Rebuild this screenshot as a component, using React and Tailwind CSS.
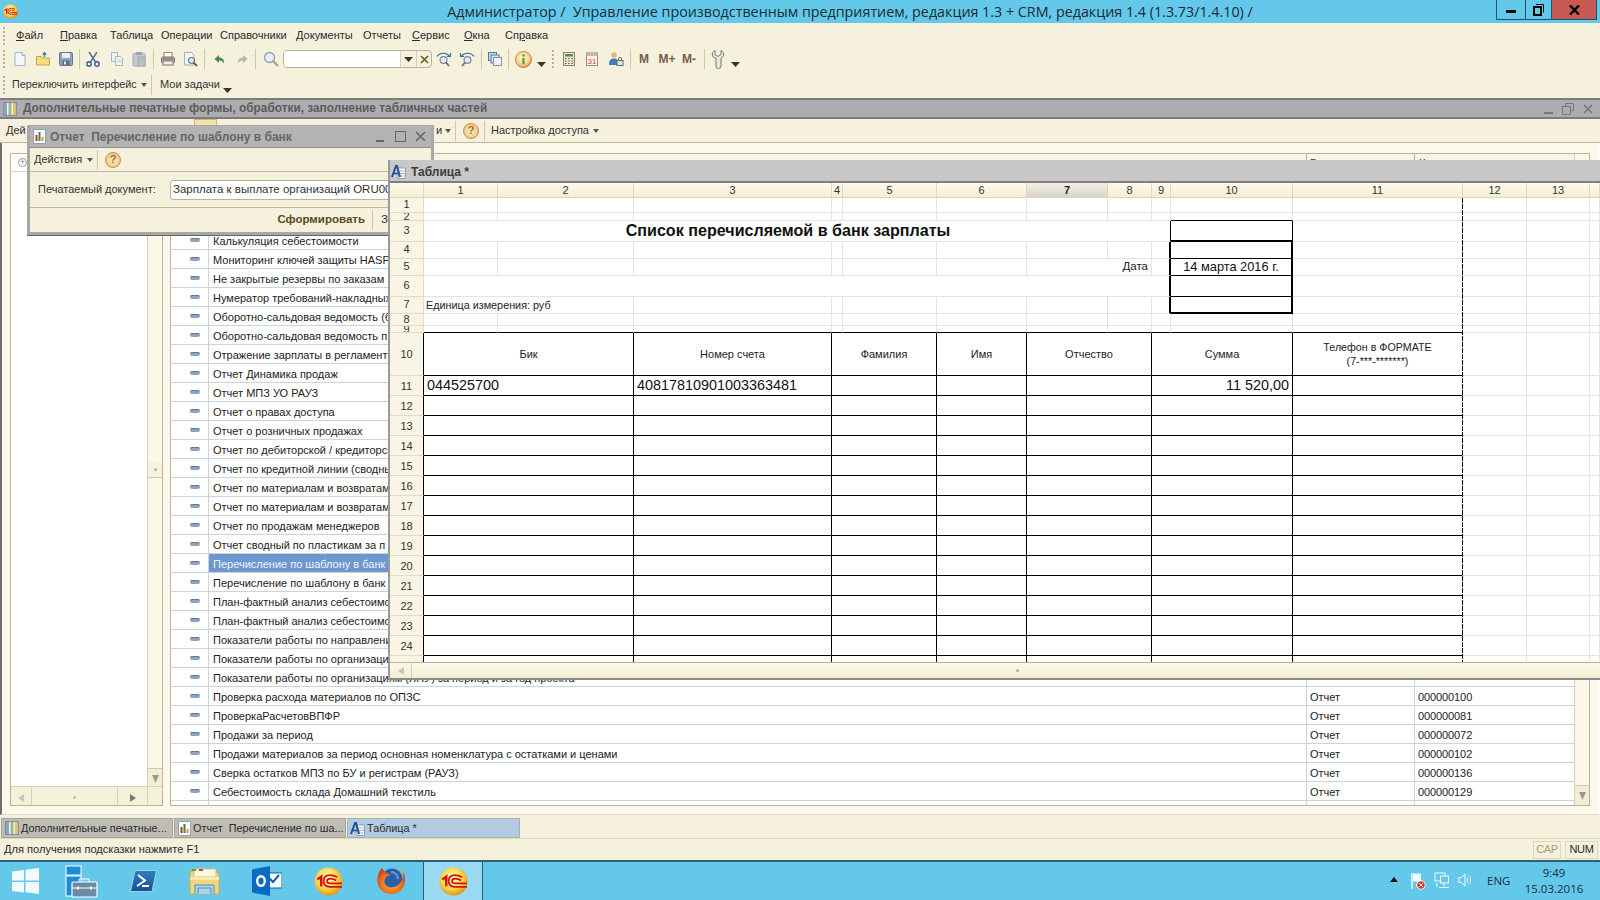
import React from "react";

const Logo1C = ({ size = 30, id = "g1c" }) => (
  <svg width={size} height={size} viewBox="0 0 30 30" className="flex-none">
    <defs>
      <radialGradient id={id} cx="45%" cy="40%" r="60%">
        <stop offset="0" stopColor="#fffbd0" />
        <stop offset="0.55" stopColor="#fbe05a" />
        <stop offset="1" stopColor="#e8960f" />
      </radialGradient>
    </defs>
    <circle cx="15" cy="15" r="14.5" fill={`url(#${id})`} />
    <path d="M3.5 13 L7.5 10 V20" fill="none" stroke="#d4140c" strokeWidth="2.6" />
    <path d="M24 10.5 Q20 8.5 16.5 8.5 Q10 8.5 10 14.5 Q10 20.5 16.5 20.5 H29" fill="none" stroke="#d4140c" strokeWidth="1.8" />
    <path d="M23 14 Q20 12 17 12 Q13.5 12 13.5 14.5 Q13.5 17 17 17 H29" fill="none" stroke="#d4140c" strokeWidth="1.8" />
  </svg>
);

const S = ({ children, w = 16, h = 16, vb = "0 0 16 16" }) => (
  <svg width={w} height={h} viewBox={vb} className="flex-none">{children}</svg>
);

const DocNew = () => (<S><path d="M3 1.5h7l3 3v10H3z" fill="#f4f8fc" stroke="#9db4cc" /><path d="M10 1.5v3h3" fill="#dce8f4" stroke="#9db4cc" /></S>);
const Folder = () => (<S><path d="M1.5 5.5h5l1 1.5h7v7h-13z" fill="#f7dc7c" stroke="#c9a446" /><path d="M9.5 6V2M7.8 3.6 9.5 1.6l1.8 2" stroke="#3c7fb0" strokeWidth="1.4" fill="none" /></S>);
const Save = () => (<S><rect x="1.5" y="1.5" width="13" height="13" rx="1" fill="#8ea3b8" stroke="#66798c" /><rect x="4" y="2" width="8" height="5" fill="#e8eef4" /><rect x="4.5" y="9.5" width="7" height="5" fill="#5c6f82" /><rect x="6" y="10.5" width="2" height="3" fill="#e0e6ec" /></S>);
const Cut = () => (<S><path d="M4 1 10.5 11M12 1 5.5 11" stroke="#5b6f85" strokeWidth="1.4" fill="none" /><circle cx="4" cy="13" r="2.2" fill="none" stroke="#2f5f9e" strokeWidth="1.4" /><circle cx="12" cy="13" r="2.2" fill="none" stroke="#2f5f9e" strokeWidth="1.4" /></S>);
const Copy = () => (<S><path d="M2.5 1.5h6v9h-6z" fill="#eef1f5" stroke="#aab4bf" /><path d="M6.5 5.5h5l2 2v7h-7z" fill="#f4f6f8" stroke="#aab4bf" /><path d="M8 9h4M8 11h4" stroke="#c0c8d0" /></S>);
const Paste = () => (<S><rect x="2" y="2.5" width="12" height="12.5" rx="1" fill="#c3cad0" stroke="#a4acb4" /><rect x="5" y="1" width="6" height="3" fill="#9aa4ac" /><rect x="7" y="6" width="7" height="9" fill="#b8c0c6" stroke="#a0a8b0" /></S>);
const Printer = () => (<S><rect x="4" y="1.5" width="8" height="5" fill="#fff" stroke="#8d8d8d" /><rect x="1.5" y="6" width="13" height="6" rx="1.5" fill="#b9b6b0" stroke="#6e6a66" /><rect x="3" y="10" width="10" height="4" fill="#eee" stroke="#86786a" /><path d="M2.5 8h11" stroke="#8a4b3a" /></S>);
const Preview = () => (<S><path d="M2.5 1.5h7l2.5 2.5v10h-9.5z" fill="#f4f7fa" stroke="#a3afbc" /><circle cx="9.5" cy="9.5" r="3" fill="#dbe9f5" stroke="#5d7893" strokeWidth="1.2" /><path d="M11.5 11.5 15 15" stroke="#8a5a34" strokeWidth="1.8" /></S>);
const Back = () => (<S><path d="M7 4 2.5 8 7 12V9.5c2.5 0 4 1 5 3 .6-3.5-1.6-6-5-6z" fill="#3f8f4a" /></S>);
const Fwd = () => (<S><path d="M9 4 13.5 8 9 12V9.5c-2.5 0-4 1-5 3-.6-3.5 1.6-6 5-6z" fill="#a9bdb0" /></S>);
const Search = () => (<S><circle cx="6.5" cy="6.5" r="5" fill="#e6eef6" stroke="#8ea0b0" strokeWidth="1.3" /><path d="M10.2 10.2 15 15" stroke="#b89968" strokeWidth="2.2" /></S>);
const FindNext = ({ flip }) => (
  <S>
    <g transform={flip ? "matrix(-1 0 0 1 16 0)" : undefined}>
      <circle cx="7.5" cy="9" r="3.4" fill="#e4edf5" stroke="#77889a" strokeWidth="1.2" />
      <path d="M10 11.5 13 15" stroke="#7a6a58" strokeWidth="1.8" />
      <path d="M1 5.5C4 1.5 10 1 13.5 5M14.5 2v3.5H11" stroke="#2f6fa0" strokeWidth="1.2" fill="none" />
    </g>
  </S>
);
const Windows = () => (<S><rect x="1.5" y="1.5" width="8" height="8" fill="#c9d8ea" stroke="#4f7aa6" /><rect x="4" y="4" width="8" height="8" fill="#dce6f0" stroke="#4f7aa6" /><rect x="6.5" y="6.5" width="8" height="8" fill="#eef2f6" stroke="#7f95ab" /></S>);
const Info = () => (
  <svg width="17" height="17" viewBox="0 0 17 17" className="flex-none">
    <defs><radialGradient id="gi" cx="45%" cy="40%" r="60%"><stop offset="0" stopColor="#fff6da" /><stop offset="0.7" stopColor="#f6d48a" /><stop offset="1" stopColor="#d9963c" /></radialGradient></defs>
    <circle cx="8.5" cy="8.5" r="8" fill="url(#gi)" stroke="#c08a40" />
    <circle cx="8.5" cy="4.5" r="1.2" fill="#5f9a3c" />
    <rect x="7.4" y="6.8" width="2.2" height="6.4" fill="#5f9a3c" />
  </svg>
);
const Help = () => (
  <div className="w-[16px] h-[16px] rounded-full bg-radial from-[#fff2cf] to-[#e9b566] border border-[#c88f3e] flex items-center justify-center text-[11px] font-bold leading-none text-[#a9702a] flex-none">?</div>
);
const Calc = () => (<S><rect x="2.5" y="1.5" width="11" height="13" fill="#efe9cf" stroke="#8a8468" /><rect x="4" y="3" width="8" height="2.5" fill="#5f8a5f" /><path d="M4 7.5h1.5M7.2 7.5h1.5M10.4 7.5H12M4 10h1.5M7.2 10h1.5M10.4 10H12M4 12.5h1.5M7.2 12.5h1.5M10.4 12.5H12" stroke="#555" strokeWidth="1.2" /></S>);
const Calendar = () => (
  <S><rect x="2.5" y="2" width="11" height="12.5" fill="#fbf8ee" stroke="#a08a70" /><rect x="2.5" y="2" width="11" height="3" fill="#cbb8a0" /><text x="8" y="13" textAnchor="middle" fontSize="8" fill="#d0402a" fontFamily="Liberation Sans">31</text></S>
);
const UserLock = () => (<S><circle cx="6" cy="4" r="2.8" fill="#e6b678" /><path d="M1 13c0-4 2-5.5 5-5.5 1.5 0 2.5.4 3 1V14H1z" fill="#3d7cc0" /><rect x="9" y="9.5" width="6" height="5" fill="#e6e6e6" stroke="#666" /><path d="M10.5 9.5V8a1.6 1.6 0 0 1 3.2 0v1.5" fill="none" stroke="#666" /></S>);
const Wrench = () => (<S w={16} h={20} vb="0 0 16 20"><path d="M5 1.5v4l3 2 3-2v-4c2 1 3 2.5 2.6 4.6-.3 1.6-1.4 2.6-2.6 3V17a2.5 2.5 0 0 1-5 0V9.1C3.8 8.7 2.7 7.7 2.4 6.1 2 4 3 2.5 5 1.5z" fill="#e8e8e4" stroke="#77776f" /></S>);
const Tri = () => (<svg width="9" height="5" viewBox="0 0 9 5" className="flex-none"><path d="M0 0h9L4.5 5z" fill="#3a3524" /></svg>);
const Caret = () => (<svg width="6" height="4" viewBox="0 0 6 4" className="flex-none"><path d="M0 0h6L3 4z" fill="#555" /></svg>);

const TableIcon = () => (<S w={14} h={16} vb="0 0 14 16"><rect x="0.5" y="1.5" width="13" height="13" fill="#f5f1dc" stroke="#88a" /><rect x="1" y="2" width="3" height="12" fill="#7fa9c9" /><rect x="5.5" y="2" width="3" height="12" fill="#9fb98a" /><rect x="10" y="2" width="3" height="12" fill="#d8c470" /></S>);
const ReportIcon = () => (<S w={13} h={15} vb="0 0 13 15"><path d="M.5.5h12v14H.5z" fill="#fff" stroke="#8fa0b4" /><rect x="2.5" y="6" width="2" height="6" fill="#c03020" /><rect x="5.5" y="3" width="2" height="9" fill="#3a8a3a" /><rect x="8.5" y="8" width="2" height="4" fill="#d8a020" /></S>);
const SheetIcon = () => (
  <svg width="15" height="15" viewBox="0 0 15 15" className="flex-none">
    <path d="M7 4h7.5v10.5H7z" fill="#fff" stroke="#8fa0b4" />
    <path d="M8 7h6M8 9.5h6M8 12h6" stroke="#9db4cc" />
    <path d="M1 13 5 2h1l3 11" fill="none" stroke="#1f4f96" strokeWidth="2" />
    <path d="M3 9.5h4.5" stroke="#1f4f96" strokeWidth="1.5" />
  </svg>
);

const Sep = ({ c = "ml-[2px]" }) => <div className={`${c} w-px h-[20px] bg-[#cdc8aa] flex-none`} />;
const Grip = ({ c }) => <div className={`${c} w-[3px] h-[18px] flex-none border-l-2 border-dotted border-[#b9b594]`} />;
const Slot = ({ c = "", children }) => <div className={`${c} w-[22px] flex-none flex items-center justify-center`}>{children}</div>;

const names = [
  "", "", "",
  "Калькуляция себестоимости",
  "Мониторинг ключей защиты HASP",
  "Не закрытые резервы по заказам",
  "Нумератор требований-накладных",
  "Оборотно-сальдовая ведомость (б",
  "Оборотно-сальдовая ведомость п",
  "Отражение зарплаты в регламент",
  "Отчет Динамика продаж",
  "Отчет МПЗ УО РАУЗ",
  "Отчет о правах доступа",
  "Отчет о розничных продажах",
  "Отчет по дебиторской / кредиторской",
  "Отчет по кредитной линии (сводный",
  "Отчет по материалам и возвратам",
  "Отчет по материалам и возвратам",
  "Отчет по продажам менеджеров",
  "Отчет сводный по пластикам за п",
  "Перечисление по шаблону в банк",
  "Перечисление по шаблону в банк",
  "План-фактный анализ себестоимости",
  "План-фактный анализ себестоимости",
  "Показатели работы по направлениям",
  "Показатели работы по организациям",
  "Показатели работы по организациям (ЛНУ) за период и за год проекта",
  "Проверка расхода материалов по ОПЗС",
  "ПроверкаРасчетовВПФР",
  "Продажи за период",
  "Продажи материалов за период основная номенклатура с остатками и ценами",
  "Сверка остатков МПЗ по БУ и регистрам (РАУЗ)",
  "Себестоимость склада Домашний текстиль",
];
const codes = { 27: "000000100", 28: "000000081", 29: "000000072", 30: "000000102", 31: "000000136", 32: "000000129" };

const ListRow = ({ i, name }) => {
  const sel = i === 20;
  return (
    <div className="flex h-[19px] flex-none border-b border-[#c9d5dc] text-[11px] leading-[20px] text-[#222]">
      <div className="w-[38px] flex-none flex items-center justify-center border-r border-[#c9d5dc] pl-[10px]">
        {name && <div className="w-[10px] h-[4px] rounded-full bg-[#8fa4ba] border-t border-[#5f7790]" />}
      </div>
      <div className={`w-[1098px] flex-none pl-[4px] whitespace-nowrap overflow-hidden border-r border-[#c9d5dc] ${sel ? "bg-[#6e97cf] text-[#eef4fb]" : ""}`}>{name}</div>
      <div className="w-[108px] flex-none pl-[3px] border-r border-[#c9d5dc]">{codes[i] ? "Отчет" : ""}</div>
      <div className="w-[159px] flex-none pl-[3px] tracking-[-0.1px]">{codes[i] || ""}</div>
    </div>
  );
};

const L = "border-r border-b border-[#e3e3e3]";
const K = "border-r border-b border-black";
const ThickR = "border-r-2 border-r-black border-b border-b-[#e3e3e3]";
const span = { 1: "col-span-1", 2: "col-span-2", 8: "col-span-8", 9: "col-span-9" };

const colHeads = ["1","2","3","4","5","6","7","8","9","10","11","12","13",""];

const RowHead = ({ n, black, low, high }) => (
  <div className={`flex items-center justify-center overflow-hidden bg-[#f9f5e4] border-b border-b-[#e2ddc2] border-r ${black ? "border-r-black" : "border-r-[#e2ddc2]"} ${low ? "pt-[1px]" : ""} ${high ? "pb-[2px]" : ""} text-[11px] leading-none text-[#333]`}>{n}</div>
);
const C = ({ s = 1, c = L, children }) => <div className={`${span[s]} ${c} overflow-hidden min-w-0`}>{children}</div>;
const lights = (n) => Array.from({ length: n }, (_, i) => <C key={`l${i}`} />);

const headCell = `${K} flex items-center justify-center text-[11px] text-[#222]`;
const TableRow = ({ n, vals = {}, low }) => (
  <>
    <RowHead n={n} black low={low} />
    <C s={2} c={headCell}>{vals.a}</C>
    <C c={headCell}>{vals.b}</C>
    <C s={2} c={headCell}>{vals.c}</C>
    <C c={headCell}>{vals.d}</C>
    <C s={2} c={headCell}>{vals.e}</C>
    <C s={2} c={headCell}>{vals.f}</C>
    <C c="border-r border-r-white border-b border-b-black flex flex-col items-center justify-center text-[10.7px] text-[#222] leading-[14px]">{vals.g}</C>
    {lights(3)}
  </>
);

const Sheet = () => (
  <div className="relative h-[479px] overflow-hidden bg-white flex-none">
    <div className="grid grid-cols-[34px_74px_136px_198px_11px_94px_90px_81px_44px_19px_122px_170px_64px_63px_10px] grid-rows-[15px_15px_8px_21px_17px_17px_21px_17px_12px_7px_43px_repeat(14,20px)_7px]">
      <div className="bg-linear-to-b from-[#fdfaec] to-[#f3eed4] border-r border-b border-[#ddd8bc]" />
      {colHeads.map((h, i) => (
        <div key={i} className={`flex items-center justify-center text-[11px] leading-none border-r border-b border-[#ddd8bc] ${h === "7" ? "bg-linear-to-b from-[#f4f1e4] to-[#d9d5c6] font-bold text-[#222]" : "bg-linear-to-b from-[#fdfaec] to-[#f3eed4] text-[#333]"}`}>{h}</div>
      ))}
      <RowHead n="1" high />{lights(14)}
      <RowHead n="2" />{lights(9)}<C c="border-r border-r-[#e3e3e3] border-b border-b-black" />{lights(4)}
      <RowHead n="3" high />
      <C s={8} c="border-b border-[#e3e3e3] flex items-center justify-center pb-[2px] text-[16.1px] font-bold text-[#111] whitespace-nowrap">Список перечисляемой в банк зарплаты</C>
      <C c="border-r border-r-black border-b border-b-[#e3e3e3]" />
      <C c="border-r border-r-black border-b-2 border-b-black" />
      {lights(4)}
      <RowHead n="4" high />{lights(8)}<C c={ThickR} /><C c="border-r-2 border-r-black border-b border-b-black" />{lights(4)}
      <RowHead n="5" high />{lights(6)}
      <C s={2} c={`${L} flex items-center justify-end pr-[3px] text-[11.5px] text-[#222]`}>Дата</C>
      <C c={ThickR} />
      <C c="border-r-2 border-r-black border-b border-b-black flex items-center justify-center text-[12.8px] text-[#111] whitespace-nowrap">14 марта 2016 г.</C>
      {lights(4)}
      <RowHead n="6" high />
      <C s={9} c={ThickR} />
      <C c="border-r-2 border-r-black border-b border-b-black" />
      {lights(4)}
      <RowHead n="7" high />
      <C s={2} c={`${L} flex items-center pl-[2px] text-[10.8px] text-[#222] whitespace-nowrap`}>Единица измерения: руб</C>
      {lights(6)}
      <C c={ThickR} />
      <C c="border-r-2 border-r-black border-b-2 border-b-black" />
      {lights(4)}
      <RowHead n="8" />{lights(14)}
      <RowHead n="9" />
      {Array.from({ length: 11 }, (_, i) => <C key={i} c="border-r border-r-[#e3e3e3] border-b border-b-black" />)}
      {lights(3)}
      <TableRow n="10" vals={{ a: "Бик", b: "Номер счета", c: "Фамилия", d: "Имя", e: "Отчество", f: "Сумма", g: (<><span>Телефон в ФОРМАТЕ</span><span>(7-***-*******)</span></>) }} />
      <RowHead n="11" black low />
      <C s={2} c={`${K} flex items-center pl-[3px] pt-[1px] text-[14.4px] text-[#111]`}>044525700</C>
      <C c={`${K} flex items-center pl-[3px] pt-[1px] text-[14.4px] text-[#111]`}>40817810901003363481</C>
      <C s={2} c={K} />
      <C c={K} />
      <C s={2} c={K} />
      <C s={2} c={`${K} flex items-center justify-end pr-[3px] pt-[1px] text-[14.4px] text-[#111] whitespace-nowrap`}>11 520,00</C>
      <C c="border-r border-r-white border-b border-b-black" />
      {lights(3)}
      {Array.from({ length: 13 }, (_, i) => <TableRow key={i} n={String(12 + i)} low />)}
      <TableRow n="" />
    </div>
    <div className="absolute left-[1072px] top-[15px] bottom-0 w-px bg-[repeating-linear-gradient(to_bottom,#000_0,#000_5px,transparent_5px,transparent_6px)]" />
  </div>
);

const Btn = ({ children, c = "" }) => <div className={`flex-none flex items-center justify-center ${c}`}>{children}</div>;

const TaskIcon = ({ c, children }) => <div className={`absolute top-0 bottom-0 flex items-center ${c}`}>{children}</div>;

export default function App() {
  return (
    <div className="relative w-[1600px] h-[900px] overflow-hidden bg-[#f5f1dc] font-['Liberation_Sans',Arial,sans-serif] text-[11px] text-[#333]">
      {/* Title bar */}
      <div className="relative h-[23px] bg-[#63c8ea] flex items-center justify-center">
        <div className="absolute left-[3px] top-[4px]"><Logo1C size={15} id="g1ct" /></div>
        <div className="pl-[100px] font-['Open_Sans',sans-serif] text-[14.3px] text-[#1b2a33] whitespace-pre">Администратор /  Управление производственным предприятием, редакция 1.3 + CRM, редакция 1.4 (1.3.73/1.4.10) /</div>
        <div className="absolute right-[3px] top-0 h-[20px] flex border-b border-l border-r border-[#1f5468]">
          <div className="w-[29px] flex items-center justify-center border-r border-[#1f5468]"><div className="w-[10px] h-[3px] bg-black mt-[3px]" /></div>
          <div className="w-[26px] flex items-center justify-center border-r border-[#1f5468]">
            <svg width="11" height="12" viewBox="0 0 11 12"><path d="M3 0.5h7.5v8" fill="none" stroke="#000" /><rect x="1" y="3" width="7" height="8" fill="none" stroke="#000" strokeWidth="2" /></svg>
          </div>
          <div className="w-[44px] bg-[#c75a52] flex items-center justify-center">
            <svg width="11" height="10" viewBox="0 0 11 10"><path d="M1 0.5 10 9.5M10 0.5 1 9.5" stroke="#000" strokeWidth="2.4" /></svg>
          </div>
        </div>
      </div>

      {/* Menu */}
      <div className="h-[25px] flex items-center relative text-[11px] text-[#2b2b2b] whitespace-nowrap">
        <Grip c="ml-[3px]" />
        <span className="ml-[10px] w-[44px] flex-none"><u>Ф</u>айл</span>
        <span className="w-[50px] flex-none"><u>П</u>равка</span>
        <span className="w-[51px] flex-none">Таблица</span>
        <span className="w-[59px] flex-none">Операции</span>
        <span className="w-[76px] flex-none">Справочники</span>
        <span className="w-[67px] flex-none">Документы</span>
        <span className="w-[49px] flex-none">Отчеты</span>
        <span className="w-[52px] flex-none"><u>С</u>ервис</span>
        <span className="w-[41px] flex-none"><u>О</u>кна</span>
        <span>Сп<u>р</u>авка</span>
      </div>

      {/* Toolbar 1 */}
      <div className="h-[22px] flex items-center">
        <Grip c="ml-[3px]" />
        <Slot c="ml-[3px]"><DocNew /></Slot>
        <Slot c="ml-px"><Folder /></Slot>
        <Slot c="ml-px"><Save /></Slot>
        <Sep c="ml-[2px]" />
        <Slot c="ml-[2px]"><Cut /></Slot>
        <Slot c="ml-[2px]"><Copy /></Slot>
        <Slot><Paste /></Slot>
        <Sep c="ml-[3px]" />
        <Slot c="ml-[3px]"><Printer /></Slot>
        <Slot><Preview /></Slot>
        <Sep c="ml-[3px]" />
        <Slot c="ml-[4px]"><Back /></Slot>
        <Slot><Fwd /></Slot>
        <Sep c="ml-[2px]" />
        <Slot c="ml-[4px]"><Search /></Slot>
        <div className="ml-px w-[149px] h-[18px] flex-none flex rounded-[4px] border border-[#b8b49a] overflow-hidden">
          <div className="flex-1 bg-white" />
          <div className="w-[16px] flex items-center justify-center border-l border-[#d6d2b8]"><Tri /></div>
          <div className="w-[15px] flex items-center justify-center border-l border-[#d6d2b8]">
            <svg width="9" height="9" viewBox="0 0 9 9"><path d="M1 1l7 7M8 1 1 8" stroke="#6a5a20" strokeWidth="1.6" /></svg>
          </div>
        </div>
        <Slot c="ml-px"><FindNext /></Slot>
        <Slot c="ml-px"><FindNext flip /></Slot>
        <Sep c="ml-[3px]" />
        <Slot c="ml-[2px]"><Windows /></Slot>
        <Sep c="ml-[2px]" />
        <Slot c="ml-[3px]"><Info /></Slot>
        <Btn c="ml-[2px] w-[10px] pt-[11px]"><Tri /></Btn>
        <Grip c="ml-[6px]" />
        <Slot c="ml-[3px]"><Calc /></Slot>
        <Slot c="ml-px"><Calendar /></Slot>
        <Slot c="ml-[2px]"><UserLock /></Slot>
        <Sep c="ml-[3px]" />
        <Slot c="ml-[2px]"><span className="text-[12px] font-bold text-[#7a5a48]">M</span></Slot>
        <Slot c="ml-px"><span className="text-[12px] font-bold text-[#7a5a48]">M+</span></Slot>
        <Slot><span className="text-[12px] font-bold text-[#7a5a48]">M-</span></Slot>
        <Sep c="ml-[4px]" />
        <Slot c="ml-[2px]"><Wrench /></Slot>
        <Btn c="ml-px w-[10px] pt-[11px]"><Tri /></Btn>
      </div>

      {/* Toolbar 2 */}
      <div className="h-[28px] flex items-center pt-[1px] text-[10.75px]">
        <Grip c="ml-[3px]" />
        <span className="ml-[6px] w-[125px] flex-none whitespace-nowrap">Переключить интерфейс</span>
        <span className="ml-[4px]"><Caret /></span>
        <Sep c="ml-[4px]" />
        <span className="ml-[8px] w-[58px] flex-none whitespace-nowrap text-[11px]">Мои задачи</span>
        <Btn c="ml-[5px] w-[9px] pt-[12px]"><Tri /></Btn>
      </div>

      {/* Window 1 title */}
      <div className="h-[21px] bg-[#adadad] border-t-2 border-b-2 border-[#7c7c7c] flex items-center pl-[3px] pr-[7px] relative">
        <TableIcon />
        <span className="ml-[6px] text-[11.85px] font-bold text-[#5b5b5b] whitespace-nowrap">Дополнительные печатные формы, обработки, заполнение табличных частей</span>
        <div className="ml-auto flex items-center gap-[9px] text-[#6a6a6a]">
          <div className="w-[9px] h-[2px] bg-[#777] mt-[8px]" />
          <svg width="12" height="12" viewBox="0 0 12 12"><path d="M3.5 3V.5h8v7H9" fill="none" stroke="#777" /><rect x=".5" y="3.5" width="8" height="8" fill="none" stroke="#777" /></svg>
          <svg width="10" height="10" viewBox="0 0 10 10"><path d="M1 1l8 8M9 1 1 9" stroke="#777" strokeWidth="1.6" /></svg>
        </div>
      </div>

      {/* Window 1 toolbar */}
      <div className="h-[24px] flex items-center border-b border-[#bdb99c] relative pl-[6px] text-[11px]">
        <span className="w-[430px] flex-none">Дей</span>
        <span className="w-[6px] flex-none">и</span>
        <span className="ml-[3px]"><Caret /></span>
        <Sep c="ml-[4px]" />
        <span className="ml-[7px]"><Help /></span>
        <Sep c="ml-[5px]" />
        <span className="ml-[6px] whitespace-nowrap">Настройка доступа</span>
        <span className="ml-[4px]"><Caret /></span>
        <div className="absolute left-[194px] top-0 w-[23px] h-[8px] bg-[#f3e3a8] border border-[#c8b87a]" />
      </div>

      {/* Window 1 body */}
      <div className="h-[672px] flex items-start gap-[7px] bg-[#fcf9ec] pt-[10px] pl-[8px] border-l-2 border-l-[#6f6f6f] border-r-2 border-r-white border-b border-b-[#dfdcc8]">
        {/* tree */}
        <div className="w-[153px] h-[653px] flex-none flex flex-col border border-[#b9b594] bg-white">
          <div className="flex-1 flex min-h-0">
            <div className="w-[136px] flex-none">
              <div className="h-[18px] border-b border-[#d6d6d6] flex items-center pl-[7px]">
                <div className="w-[9px] h-[9px] rounded-full border border-[#9a9a9a] flex items-center justify-center text-[9px] leading-none text-[#777]">+</div>
              </div>
            </div>
            <div className="w-[15px] flex-none flex flex-col border-l border-[#d6d2b8] bg-[#fbf8ea]">
              <div className="h-[308px] flex-none" />
              <div className="h-[16px] flex-none border-b border-[#cfcbb0] bg-[#f6f2df] flex items-center justify-center"><div className="w-[3px] h-[3px] rounded-full bg-[#b7b39c]" /></div>
              <div className="flex-1" />
              <div className="h-[18px] flex-none bg-[#f1edd6] border-t border-[#cfcbb0] flex items-center justify-center pt-[3px]">
                <svg width="7" height="8" viewBox="0 0 7 8"><path d="M0 0h7L3.5 8z" fill="#9a9a90" /></svg>
              </div>
            </div>
          </div>
          <div className="h-[19px] flex-none flex border-t border-[#d6d2b8] bg-[#f4f0da]">
            <div className="w-[21px] flex items-center justify-center border-r border-[#d6d2b8] pt-[3px]">
              <svg width="6" height="8" viewBox="0 0 6 8"><path d="M6 0v8L0 4z" fill="#c8c6b8" /></svg>
            </div>
            <div className="w-[86px] flex items-center justify-center border-r border-[#d6d2b8] pt-[3px]"><div className="w-[3px] h-[3px] rounded-full bg-[#c4c0a8]" /></div>
            <div className="w-[30px] flex items-center justify-center border-r border-[#d6d2b8] pt-[3px]">
              <svg width="6" height="8" viewBox="0 0 6 8"><path d="M0 0v8l6-4z" fill="#77776f" /></svg>
            </div>
          </div>
        </div>

        {/* list table */}
        <div className="w-[1420px] h-[653px] flex-none flex border border-[#b9b594] bg-white">
          <div className="w-[1403px] flex-none flex flex-col">
            <div className="h-[20px] flex-none flex border-b border-[#c9d5dc] bg-[#f8f5e6] text-[11px] leading-[18px]">
              <div className="w-[1135px] flex-none border-r border-[#b9b594] ml-[1px]" />
              <div className="w-[108px] flex-none pl-[3px] border-r border-[#b9b594]">Вид</div>
              <div className="w-[159px] flex-none pl-[4px]">Код</div>
            </div>
            {names.map((n, i) => <ListRow key={i} i={i} name={n} />)}
            <div className="flex-1 flex">
              <div className="w-[38px] border-r border-[#c9d5dc]" />
              <div className="w-[1098px] border-r border-[#c9d5dc]" />
              <div className="w-[108px] border-r border-[#c9d5dc]" />
            </div>
          </div>
          <div className="w-[15px] flex-none flex flex-col justify-end border-l border-[#d6d2b8] bg-[#fbf8ea]">
            <div className="h-[20px] bg-[#f1edd6] border-t border-[#cfcbb0] flex items-center justify-center">
              <svg width="7" height="8" viewBox="0 0 7 8"><path d="M0 0h7L3.5 8z" fill="#9a9a90" /></svg>
            </div>
          </div>
        </div>
      </div>

      {/* Window tabs */}
      <div className="h-[24px] flex items-start pt-[3px] pl-px gap-px text-[10.85px] text-[#2b2b2b] border-b border-[#dcd8c0]">
        <div className="w-[172px] h-[20px] flex items-center gap-[2px] pl-[3px] bg-[#bdbdb4] border border-[#a5a49a] whitespace-pre overflow-hidden"><TableIcon /><span>Дополнительные печатные...</span></div>
        <div className="w-[172px] h-[20px] flex items-center gap-[2px] pl-[3px] bg-[#bdbdb4] border border-[#a5a49a] whitespace-pre overflow-hidden"><ReportIcon /><span>Отчет  Перечисление по ша...</span></div>
        <div className="w-[173px] h-[20px] flex items-center gap-[2px] pl-[2px] bg-[#b3cae3] border border-[#a7b6a8] whitespace-pre overflow-hidden"><SheetIcon /><span>Таблица *</span></div>
      </div>

      {/* Status */}
      <div className="h-[21px] flex items-center pl-[4px] text-[11.1px] text-[#2b2b2b]">
        <span>Для получения подсказки нажмите F1</span>
        <div className="ml-auto flex items-center gap-[4px] pr-[2px] tracking-[-0.3px] text-[11px]">
          <div className="w-[28px] h-[18px] flex items-center justify-center border border-[#dcd8c0] text-[#a39c78]">CAP</div>
          <div className="w-[33px] h-[18px] flex items-center justify-center border border-[#dcd8c0]">NUM</div>
        </div>
      </div>

      {/* Windows taskbar */}
      <div className="relative h-[40px] bg-[#63c8ea] border-t-2 border-[#2e6072]">
        <TaskIcon c="left-[12px]">
          <svg width="27" height="26" viewBox="0 0 27 26"><path d="M0 3.5 12 2v10.5H0zM13.5 1.8 27 0v12.5H13.5zM0 14h12v10.5L0 23zM13.5 14H27v12l-13.5-1.8z" fill="#f2fafd" /></svg>
        </TaskIcon>
        <TaskIcon c="left-[65px]">
          <svg width="33" height="33" viewBox="0 0 33 33">
            <rect x="1" y="1" width="15" height="9" fill="#1c8ed8" stroke="#fff" /><rect x="1" y="11" width="15" height="20" fill="#1c8ed8" stroke="#fff" />
            <rect x="7" y="17" width="25" height="15" rx="1" fill="#6c8aa3" stroke="#fff" strokeWidth="1.2" />
            <path d="M14 17v-3h10v3M7 23h25" stroke="#fff" fill="none" /><rect x="12" y="21.5" width="2" height="3" fill="#fff" /><rect x="25" y="21.5" width="2" height="3" fill="#fff" />
          </svg>
        </TaskIcon>
        <TaskIcon c="left-[130px]">
          <svg width="27" height="22" viewBox="0 0 27 22">
            <defs><linearGradient id="gps" x1="0" y1="0" x2="0" y2="1"><stop offset="0" stopColor="#2f7fc6" /><stop offset="1" stopColor="#164f8f" /></linearGradient></defs>
            <path d="M5 0.5h21.5L22 21.5H.5z" fill="url(#gps)" stroke="#9fd2ec" />
            <path d="M8 5l7 5.5L7 16M12 16h7" fill="none" stroke="#fff" strokeWidth="2" />
          </svg>
        </TaskIcon>
        <TaskIcon c="left-[189px]">
          <svg width="31" height="28" viewBox="0 0 31 28">
            <path d="M1 4h11l2 2h16v21H1z" fill="#f1d67e" stroke="#cfa94e" />
            <rect x="5" y="2" width="22" height="8" fill="#fdf8e0" stroke="#d8c27a" />
            <rect x="3" y="2" width="4" height="2" fill="#5aa845" /><rect x="10" y="2" width="4" height="2" fill="#d8432f" />
            <path d="M1 10h29v3H1z" fill="#f9e9a8" />
            <path d="M6 27v-9h19v9M9 27v-6h13v6" fill="#a9d4ea" stroke="#4f8fb4" />
          </svg>
        </TaskIcon>
        <TaskIcon c="left-[252px]">
          <svg width="30" height="30" viewBox="0 0 30 30">
            <rect x="13" y="7" width="17" height="15" fill="#fff" stroke="#0a5fb0" />
            <path d="M16 11l5 5 6-7" stroke="#0a5fb0" strokeWidth="2" fill="none" />
            <path d="M0 3.5 18 0v30L0 26.5z" fill="#0a6cc0" />
            <ellipse cx="9" cy="15" rx="3.8" ry="4.8" fill="none" stroke="#fff" strokeWidth="2.4" />
          </svg>
        </TaskIcon>
        <TaskIcon c="left-[314px]"><Logo1C size={29} id="g1c1" /></TaskIcon>
        <TaskIcon c="left-[376px]">
          <svg width="30" height="30" viewBox="0 0 30 30">
            <defs><radialGradient id="gff" cx="50%" cy="60%" r="60%"><stop offset="0" stopColor="#fbc02d" /><stop offset="0.6" stopColor="#f0701e" /><stop offset="1" stopColor="#c8401a" /></radialGradient></defs>
            <circle cx="16" cy="13" r="10.5" fill="#2a5fa8" />
            <path d="M15 6c4 0 7 3 7 7" stroke="#5f9ad8" strokeWidth="2" fill="none" />
            <path d="M6 2C1 7 0 16 3 21c4 8 17 10 23 2 4-5 4-13 1-17 1 6-2 13-9 15-7 2-11-3-9-8 1-3 3-4 6-4-4-2-7-3-9-7z" fill="url(#gff)" />
            <path d="M27 6c-1-2-3-4-5-5 2 2 3 4 3 6z" fill="#f4a020" />
          </svg>
        </TaskIcon>
        <div className="absolute left-[423px] top-0 bottom-0 w-[60px] bg-[#9bd8f1] border-x border-[#2e6072] flex items-center justify-center"><Logo1C size={29} id="g1c2" /></div>

        <div className="absolute left-[1390px] top-[15px]"><svg width="8" height="5" viewBox="0 0 8 5"><path d="M4 0l4 5H0z" fill="#111" /></svg></div>
        <div className="absolute left-[1410px] top-[10px]">
          <svg width="16" height="18" viewBox="0 0 16 18"><path d="M2 1v16" stroke="#e8f6fb" strokeWidth="1.5" /><path d="M3 1.5h8v8H3z" fill="#f2fafd" /><circle cx="11" cy="13" r="4.2" fill="#d8342a" stroke="#fff" /><path d="M9.2 11.2l3.6 3.6M12.8 11.2l-3.6 3.6" stroke="#fff" /></svg>
        </div>
        <div className="absolute left-[1434px] top-[10px]">
          <svg width="16" height="17" viewBox="0 0 16 17" fill="none" stroke="#f2fafd"><rect x="1" y="1" width="10" height="8" /><rect x="6.5" y="4" width="8" height="7" fill="#63c8ea" /><path d="M10 11v3M5 15.5h10M3 11v4" /></svg>
        </div>
        <div className="absolute left-[1457px] top-[10px]">
          <svg width="16" height="16" viewBox="0 0 16 16" fill="none" stroke="#f2fafd"><path d="M2 5.5h2.5L8 2v12l-3.5-3.5H2z" /><path d="M10 5.5c1 1.5 1 3.5 0 5M12 3.5c2 2.5 2 6.5 0 9" /></svg>
        </div>
        <div className="absolute left-[1487px] top-0 bottom-0 flex items-center font-['Open_Sans',sans-serif] text-[11.5px] text-[#16303c]">ENG</div>
        <div className="absolute left-[1521px] w-[66px] top-[3px] flex flex-col items-center font-['Open_Sans',sans-serif] text-[11.5px] leading-[16px] text-[#16303c]">
          <span>9:49</span>
          <span>15.03.2016</span>
        </div>
      </div>

      {/* Report dialog */}
      <div className="absolute left-[27px] top-[125px] w-[407px] h-[110px] flex flex-col bg-[#f5f1dc] border-x-[3px] border-t-[1px] border-b-[3px] border-[#a8a8a8] shadow-[0_1px_0_#666]">
        <div className="h-[22px] flex-none bg-[#b3b3b3] flex items-center pl-[3px] pr-[5px] border-b border-[#8e8e8e]">
          <ReportIcon />
          <span className="ml-[4px] text-[12px] font-bold text-[#666] whitespace-pre">Отчет  Перечисление по шаблону в банк</span>
          <div className="ml-auto flex items-center">
            <div className="w-[8px] h-[2px] bg-[#666] mt-[8px]" />
            <div className="ml-[11px] w-[11px] h-[11px] border border-[#666]" />
            <svg className="ml-[9px]" width="11" height="11" viewBox="0 0 11 11"><path d="M1 1l9 9M10 1l-9 9" stroke="#666" strokeWidth="1.6" /></svg>
          </div>
        </div>
        <div className="h-[24px] flex-none flex items-center pl-[4px] border-b border-[#bdb99c] text-[11px]">
          <span className="w-[49px] flex-none">Действия</span>
          <span className="ml-[4px]"><Caret /></span>
          <Sep c="ml-[4px]" />
          <span className="ml-[7px]"><Help /></span>
        </div>
        <div className="h-[36px] flex-none flex items-center pl-[8px] border-b border-[#bdb99c] whitespace-nowrap overflow-hidden">
          <span className="w-[132px] flex-none text-[11px]">Печатаемый документ:</span>
          <div className="w-[260px] h-[20px] flex-none flex items-center pl-[2px] bg-white border border-[#b8b49a] rounded-[3px] overflow-hidden text-[11.5px]">Зарплата к выплате организаций ORU000016</div>
        </div>
        <div className="flex-1 flex items-center justify-end text-[11.5px] whitespace-nowrap overflow-hidden">
          <span className="font-bold text-[#5c4a1c]">Сформировать</span>
          <Sep c="ml-[7px]" />
          <span className="ml-[8px] w-[50px] flex-none">Закрыть</span>
        </div>
      </div>

      {/* Sheet window */}
      <div className="absolute left-[388px] top-[160px] w-[1212px] h-[520px] flex flex-col bg-[#f5f1dc] border-l-2 border-l-[#9a9a9a]">
        <div className="h-[23px] flex-none bg-[#c8c8c8] border-b-2 border-[#7f7f7f] flex items-center pl-[1px] pt-[2px]">
          <SheetIcon />
          <span className="ml-[5px] text-[12px] font-bold text-[#3c3c3c]">Таблица *</span>
        </div>
        <Sheet />
        <div className="h-[16px] flex-none flex border-t border-[#b9b594] bg-linear-to-b from-[#fbf8e8] to-[#f1edd4]">
          <div className="w-[22px] flex items-center justify-center border-r border-[#d6d2b8]">
            <svg width="6" height="8" viewBox="0 0 6 8"><path d="M6 0v8L0 4z" fill="#c8c6b8" /></svg>
          </div>
          <div className="w-[1180px] flex items-center justify-center"><div className="w-[3px] h-[3px] rounded-full bg-[#b7b39c] ml-[30px]" /></div>
        </div>
        <div className="h-[2px] flex-none bg-[#8a8a8a]" />
      </div>
    </div>
  );
}
